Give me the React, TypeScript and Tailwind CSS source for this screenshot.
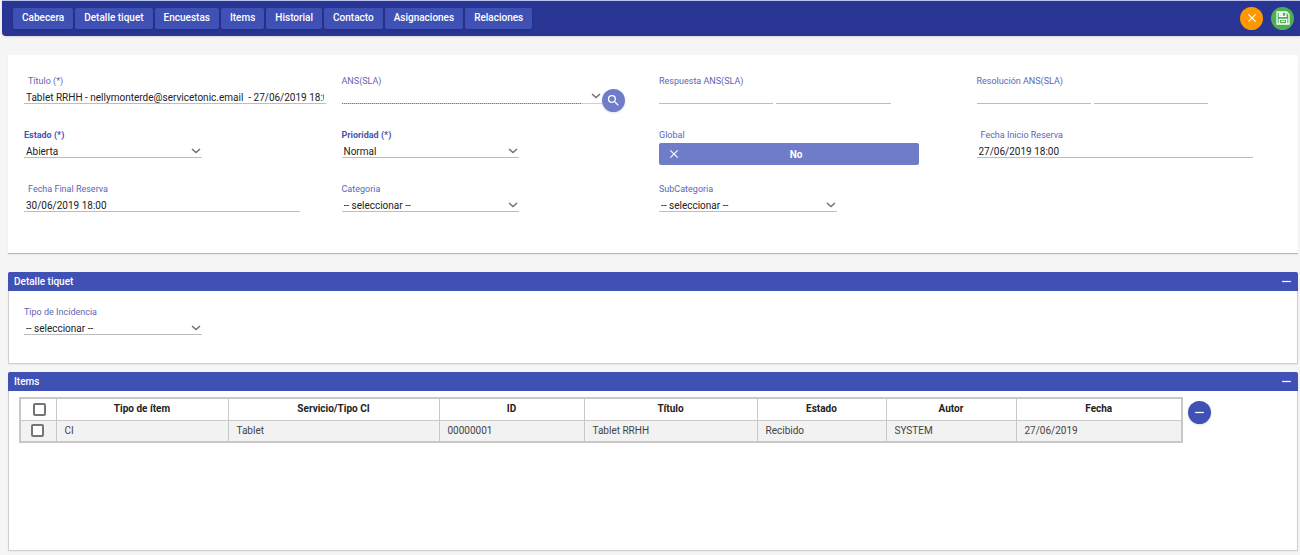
import { useState } from 'react';
import type { ReactNode } from 'react';
import { MdClose, MdRemove, MdSearch } from 'react-icons/md';
import clsx from 'clsx';

const sections = ['Cabecera', 'Detalle tiquet', 'Encuestas', 'Items', 'Historial', 'Contacto', 'Asignaciones', 'Relaciones'];

const columns = [
  { name: 'Tipo de ítem', width: 'w-[172px]' },
  { name: 'Servicio/Tipo CI', width: 'w-[211px]' },
  { name: 'ID', width: 'w-[145px]' },
  { name: 'Título', width: 'w-[173px]' },
  { name: 'Estado', width: 'w-[129px]' },
  { name: 'Autor', width: 'w-[130px]' },
  { name: 'Fecha', width: 'w-auto' },
];

const items = [['CI', 'Tablet', '00000001', 'Tablet RRHH', 'Recibido', 'SYSTEM', '27/06/2019']];

const controlClass = 'h-[14px] bg-transparent px-0.5 pt-0.5 text-[10px] leading-3 text-[#222] outline-none';
const lineClass = 'border-b border-[#bdbdbd]';

interface LabelProps {
  id: string;
  children: ReactNode;
  bold?: boolean;
  inset?: boolean;
}

function Label({ id, children, bold, inset }: LabelProps) {
  return (
    <label
      htmlFor={id}
      className={clsx('mb-[3px] block text-[9px] leading-3', bold ? 'font-bold text-[#4a55b0]' : 'text-[#5c66b5]', inset && 'pl-1')}
    >
      {children}
    </label>
  );
}

function Chevron() {
  return (
    <svg
      viewBox="0 0 10 6"
      className="pointer-events-none absolute right-px bottom-1 h-[6px] w-[10px] fill-none stroke-[#707070]"
      strokeWidth="1.5"
    >
      <path d="M1 1l4 3.5L9 1" />
    </svg>
  );
}

function SelectField({ id, label, value, bold }: { id: string; label: string; value: string; bold?: boolean }) {
  return (
    <div className="min-h-[54px]">
      <Label id={id} bold={bold}>{label}</Label>
      <div className="relative flex w-[56%]">
        <select id={id} defaultValue={value} className={clsx(controlClass, lineClass, 'w-full appearance-none')}>
          <option>{value}</option>
        </select>
        <Chevron />
      </div>
    </div>
  );
}

function TextField({ id, label, value, width }: { id: string; label: string; value: string; width: string }) {
  return (
    <div className="min-h-[54px]">
      <Label id={id} inset>{label}</Label>
      <input id={id} type="text" defaultValue={value} className={clsx(controlClass, lineClass, 'block', width)} />
    </div>
  );
}

// Date + time pair, empty while the ticket has no SLA
function SlaField({ id, label }: { id: string; label: string }) {
  return (
    <div className="min-h-[54px]">
      <Label id={id}>{label}</Label>
      <div className="flex w-[73%] gap-[3px]">
        <input id={id} type="text" readOnly className={clsx(controlClass, lineClass, 'w-full min-w-0 flex-1')} />
        <input type="text" readOnly aria-label={`${label} hora`} className={clsx(controlClass, lineClass, 'w-full min-w-0 flex-1')} />
      </div>
    </div>
  );
}

function Panel({ title, children }: { title: string; children: ReactNode }) {
  const [open, setOpen] = useState(true);
  return (
    <section className="rounded-t-xs border border-[#cfcfcf] bg-white shadow-xs">
      <header className="-mx-px -mt-px flex h-[19px] items-center justify-between rounded-t-xs bg-[#3f51b5] pr-1 pl-1.5 text-white">
        <h2 className="text-[10px] leading-4 font-medium">{title}</h2>
        <button type="button" aria-label={`Contraer ${title}`} onClick={() => setOpen(!open)}>
          <MdRemove size={15} stroke="currentColor" />
        </button>
      </header>
      {open && children}
    </section>
  );
}

function SaveIcon() {
  return (
    <svg viewBox="0 0 14 14" className="h-[14px] w-[14px] fill-none stroke-white" strokeWidth="1.3">
      <path d="M1 1h9.6L13 3.4V13H1z" />
      <path d="M3.5 1v4.3h6.4V1M3.3 13V8.3h7.4V13M5 10.4h4" />
      <path d="M4.2 1.2h2.6v3.6H4.2z" fill="white" stroke="none" />
    </svg>
  );
}

function CheckBox({ label }: { label: string }) {
  return (
    <input
      type="checkbox"
      aria-label={label}
      className="block h-[13px] w-[13px] appearance-none rounded-[2px] border-2 border-[#757575] bg-white checked:bg-[#3f51b5]"
    />
  );
}

export default function App() {
  const [global, setGlobal] = useState(false);

  return (
    <div className="min-h-screen bg-[#f5f5f5] font-['Roboto',sans-serif] text-[#333]">
      <header className="ml-0.5 flex h-9 items-center justify-between rounded-bl-sm border-t border-[#b9c3ec] bg-[#283593] pr-1.5 pb-px pl-[11px] shadow-sm">
        <nav className="flex gap-0.5">
          {sections.map((section) => (
            <button
              key={section}
              type="button"
              className="h-[21px] rounded-xs bg-[#3f51b5] px-[9px] text-[10px] leading-4 font-medium text-white shadow-sm"
            >
              {section}
            </button>
          ))}
        </nav>
        <div className="flex gap-2">
          <button type="button" aria-label="Cancelar" className="flex size-[23px] items-center justify-center rounded-full bg-[#ff9800] text-white">
            <MdClose size={14} stroke="currentColor" />
          </button>
          <button type="button" aria-label="Guardar" className="flex size-[23px] items-center justify-center rounded-full bg-[#4caf50] text-white">
            <SaveIcon />
          </button>
        </div>
      </header>

      <main className="mr-0.5 ml-2 pt-[19px]">
        <section className="mb-[18px] grid grid-cols-4 border-b border-[#b5b5b5] bg-white pt-5 pr-1 pb-4 pl-4 shadow-xs">
          <TextField id="titulo" label="Título (*)" value="Tablet RRHH - nellymonterde@servicetonic.email  - 27/06/2019 18:00" width="w-[95%]" />
          <div className="min-h-[54px]">
            <Label id="ans">ANS(SLA)</Label>
            <div className="flex items-start">
              <div className="relative flex h-[14px] w-[82%] border-b border-[#cfcfcf]">
                <select id="ans" disabled className={clsx(controlClass, 'w-[92%] appearance-none border-b border-dotted border-[#777]')} />
                <Chevron />
              </div>
              <button type="button" aria-label="Buscar ANS" className="-mt-px flex size-[23px] items-center justify-center rounded-full bg-[#6f7cc8] text-white shadow-sm">
                <MdSearch size={15} stroke="currentColor" />
              </button>
            </div>
          </div>
          <SlaField id="respuesta" label="Respuesta ANS(SLA)" />
          <SlaField id="resolucion" label="Resolución ANS(SLA)" />

          <SelectField id="estado" label="Estado (*)" value="Abierta" bold />
          <SelectField id="prioridad" label="Prioridad (*)" value="Normal" bold />
          <div className="min-h-[54px]">
            <Label id="global">Global</Label>
            <button
              id="global"
              type="button"
              aria-pressed={global}
              onClick={() => setGlobal(!global)}
              className="-mt-px flex h-[22px] w-[82%] items-center rounded-xs bg-[#6f7cc8] px-2 text-[10px] font-bold text-white"
            >
              <MdClose size={14} stroke="currentColor" />
              <span className="flex-1 text-center">{global ? 'Sí' : 'No'}</span>
            </button>
          </div>
          <TextField id="inicio" label="Fecha Inicio Reserva" value="27/06/2019 18:00" width="w-[87%]" />

          <TextField id="final" label="Fecha Final Reserva" value="30/06/2019 18:00" width="w-[87%]" />
          <SelectField id="categoria" label="Categoria" value="-- seleccionar --" />
          <SelectField id="subcategoria" label="SubCategoria" value="-- seleccionar --" />
        </section>

        <div className="flex flex-col gap-2">
          <Panel title="Detalle tiquet">
            <div className="grid grid-cols-4 pt-[15px] pr-1 pb-[3px] pl-[15px]">
              <SelectField id="tipo" label="Tipo de Incidencia" value="-- seleccionar --" />
            </div>
          </Panel>

          <Panel title="Items">
            <div className="flex min-h-[159px] items-start gap-[5px] py-1.5 pr-[86px] pl-2.5">
              <div className="flex-1">
                <table className="w-full table-fixed border-collapse border-2 border-[#c8c8c8] text-[10px] leading-4">
                  <thead>
                    <tr className="h-[22px]">
                      <th className="w-[36px] border border-[#c8c8c8] pl-3">
                        <CheckBox label="Seleccionar todos" />
                      </th>
                      {columns.map((column) => (
                        <th key={column.name} className={clsx('border border-[#c8c8c8] font-bold text-[#222]', column.width)}>
                          {column.name}
                        </th>
                      ))}
                    </tr>
                  </thead>
                  <tbody>
                    {items.map((item) => (
                      <tr key={item[2]} className="h-[22px] bg-[#f2f2f2]">
                        <td className="border border-[#c8c8c8] pl-2.5">
                          <CheckBox label={`Seleccionar ${item[2]}`} />
                        </td>
                        {item.map((cell) => (
                          <td key={cell} className="border border-[#c8c8c8] pl-2 text-[#444]">{cell}</td>
                        ))}
                      </tr>
                    ))}
                  </tbody>
                </table>
              </div>
              <button type="button" aria-label="Quitar item" className="mt-1 flex size-[23px] items-center justify-center rounded-full bg-[#3f51b5] text-white shadow-sm">
                <MdRemove size={15} stroke="currentColor" />
              </button>
            </div>
          </Panel>
        </div>
      </main>
    </div>
  );
}
